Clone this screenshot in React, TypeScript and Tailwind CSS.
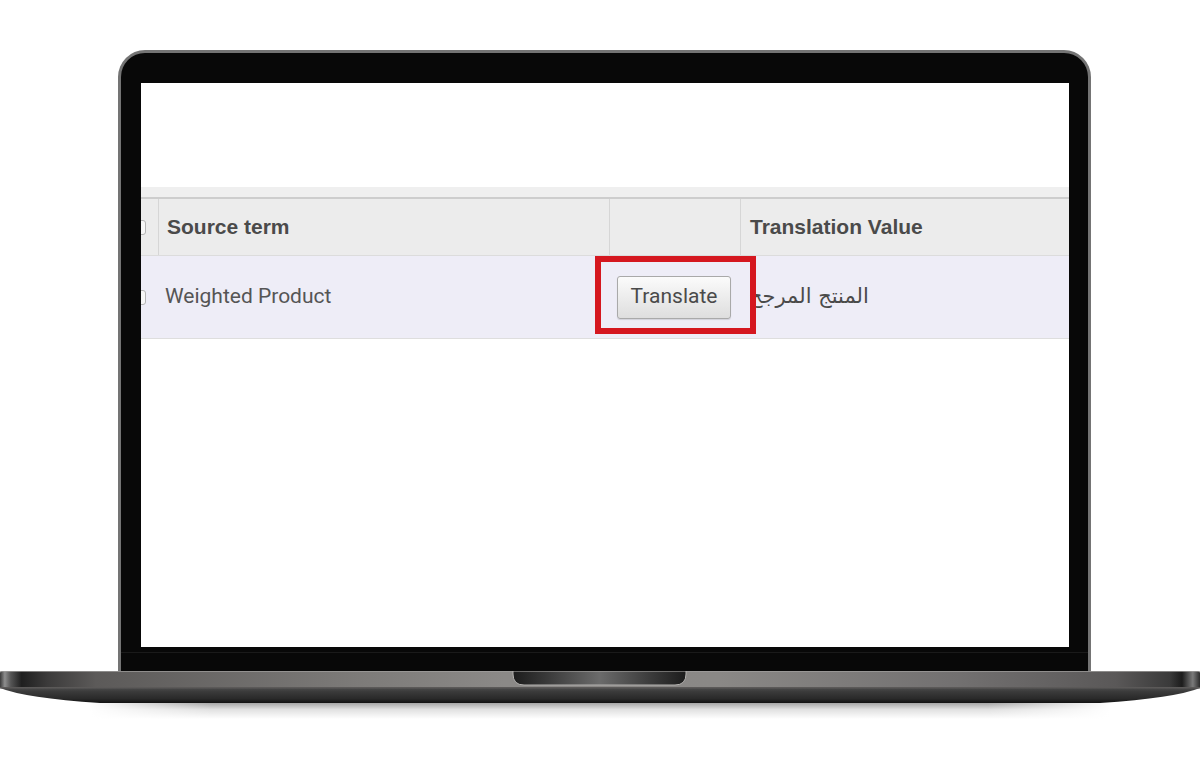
import React from "react";

function Checkbox() {
  return (
    <div className="ml-[-8px] w-[13px] h-[15px] rounded-[3px] border border-[#b5b5b5] bg-[#f7f7f7]" />
  );
}

function Base() {
  return (
    <svg width="1200" height="52" viewBox="0 0 1200 52" className="block">
      <defs>
        <linearGradient id="topBand" x1="0" y1="0" x2="1" y2="0">
          <stop offset="0" stopColor="#3a3a3a" />
          <stop offset="0.004" stopColor="#8e8e8e" />
          <stop offset="0.009" stopColor="#555" />
          <stop offset="0.018" stopColor="#1f1f1f" />
          <stop offset="0.04" stopColor="#3c3b3b" />
          <stop offset="0.08" stopColor="#5c5a59" />
          <stop offset="0.3" stopColor="#7d7b79" />
          <stop offset="0.42" stopColor="#8b8987" />
          <stop offset="0.6" stopColor="#8a8886" />
          <stop offset="0.8" stopColor="#727070" />
          <stop offset="0.93" stopColor="#5a5858" />
          <stop offset="0.975" stopColor="#3a3a3a" />
          <stop offset="0.985" stopColor="#1c1c1c" />
          <stop offset="0.994" stopColor="#7a7a7a" />
          <stop offset="1" stopColor="#2c2c2c" />
        </linearGradient>
        <linearGradient id="botBand" x1="0" y1="0" x2="0" y2="1">
          <stop offset="0" stopColor="#4a4a4a" />
          <stop offset="0.25" stopColor="#3a3a3a" />
          <stop offset="0.7" stopColor="#2a2a2a" />
          <stop offset="1" stopColor="#121212" />
        </linearGradient>
        <linearGradient id="notch" x1="0" y1="0" x2="1" y2="0">
          <stop offset="0" stopColor="#1c1c1c" />
          <stop offset="0.2" stopColor="#3a3a3a" />
          <stop offset="0.5" stopColor="#6b6b6b" />
          <stop offset="0.8" stopColor="#3a3a3a" />
          <stop offset="1" stopColor="#1c1c1c" />
        </linearGradient>
        <linearGradient id="shadow" x1="0" y1="0" x2="0" y2="1">
          <stop offset="0" stopColor="#000" stopOpacity="0.35" />
          <stop offset="0.4" stopColor="#000" stopOpacity="0.12" />
          <stop offset="1" stopColor="#000" stopOpacity="0" />
        </linearGradient>
        <linearGradient id="shadowH" x1="0" y1="0" x2="1" y2="0">
          <stop offset="0" stopColor="#fff" stopOpacity="1" />
          <stop offset="0.12" stopColor="#fff" stopOpacity="0" />
          <stop offset="0.88" stopColor="#fff" stopOpacity="0" />
          <stop offset="1" stopColor="#fff" stopOpacity="1" />
        </linearGradient>
      </defs>
      <rect x="90" y="32" width="1020" height="16" fill="url(#shadow)" />
      <rect x="90" y="32" width="1020" height="16" fill="url(#shadowH)" />
      <path d="M0,17 H1200 Q1175,27 1100,32 H100 Q25,27 0,17 Z" fill="url(#botBand)" />
      <path d="M2,0 H1198 Q1200,0 1200,2 V17 H0 V2 Q0,0 2,0 Z" fill="url(#topBand)" />
      <rect x="0" y="0" width="1200" height="1" fill="#a3a1a0" opacity="0.7" />
      <rect x="0" y="16" width="1200" height="1.5" fill="#5b5958" />
      <path d="M513,0 H686 V3 Q686,14 675,14 H524 Q513,14 513,3 Z" fill="url(#notch)" stroke="#b4b2b0" strokeWidth="1" />
    </svg>
  );
}

export default function App() {
  return (
    <div className="w-[1200px] h-[766px] bg-white overflow-hidden flex flex-col pt-[50px]" style={{ fontFamily: "Roboto, 'Liberation Sans', sans-serif" }}>
      {/* Lid */}
      <div className="ml-[118px] w-[973px] h-[621px] rounded-t-[27px] border-[3px] border-b-0 border-[#747474] bg-[#080808] flex flex-col pt-[30px] pl-[20px] pr-[19px]">
        <div className="w-[928px] h-[564px] bg-white flex flex-col overflow-hidden">
          <div className="h-[104px] shrink-0 bg-white" />
          <div className="h-[10px] shrink-0 bg-[#efefef] border-b-2 border-[#cdcdcd] box-content" />
          {/* header */}
          <div className="h-[57px] shrink-0 grid grid-cols-[18px_451px_131px_1fr] bg-[#ececec] border-b border-[#dcdcdc]" style={{ fontFamily: "'Liberation Sans', Arial, sans-serif" }}>
            <div className="border-r border-[#d6d6d6] flex items-center overflow-hidden">
              <Checkbox />
            </div>
            <div className="border-r border-[#d6d6d6] flex items-center pl-[8px] text-[21px] font-bold text-[#4a4a4a]">Source term</div>
            <div className="border-r border-[#d6d6d6]" />
            <div className="flex items-center pl-[9px] text-[21px] font-bold text-[#4a4a4a]">Translation Value</div>
          </div>
          {/* row */}
          <div className="relative h-[83px] shrink-0 grid grid-cols-[18px_451px_131px_1fr] bg-[#eeedf7] border-b border-[#dedede]">
            <div className="flex items-center overflow-hidden">
              <Checkbox />
            </div>
            <div className="flex items-center pl-[6px] text-[21px] text-[#555555]">Weighted Product</div>
            <div className="flex items-center pl-[7px]">
              <div className="w-[114px] h-[43px] rounded-[3px] border border-[#a9a9a9] bg-gradient-to-b from-[#fbfbfb] to-[#dedede] shadow-[0_1px_1px_rgba(0,0,0,0.12)] flex items-center justify-center text-[21px] text-[#4a4a4a]" style={{ fontFamily: "Roboto, sans-serif" }}>
                Translate
              </div>
            </div>
            <div className="flex items-center pl-[8px] text-[21px] text-[#4a4a4a]" style={{ fontFamily: "'DejaVu Sans', 'Noto Sans', sans-serif" }}>
              <span dir="rtl">المنتج المرجح</span>
            </div>
            <div className="absolute left-[454px] top-0 w-[161px] h-[78px] border-[6px] border-[#d5171f] pointer-events-none" />
          </div>
          <div className="flex-1 bg-white" />
        </div>
        <div className="mt-[5px] h-px bg-[#1a1a1a] ml-[-20px] mr-[-19px]" />
      </div>
      <Base />
    </div>
  );
}
